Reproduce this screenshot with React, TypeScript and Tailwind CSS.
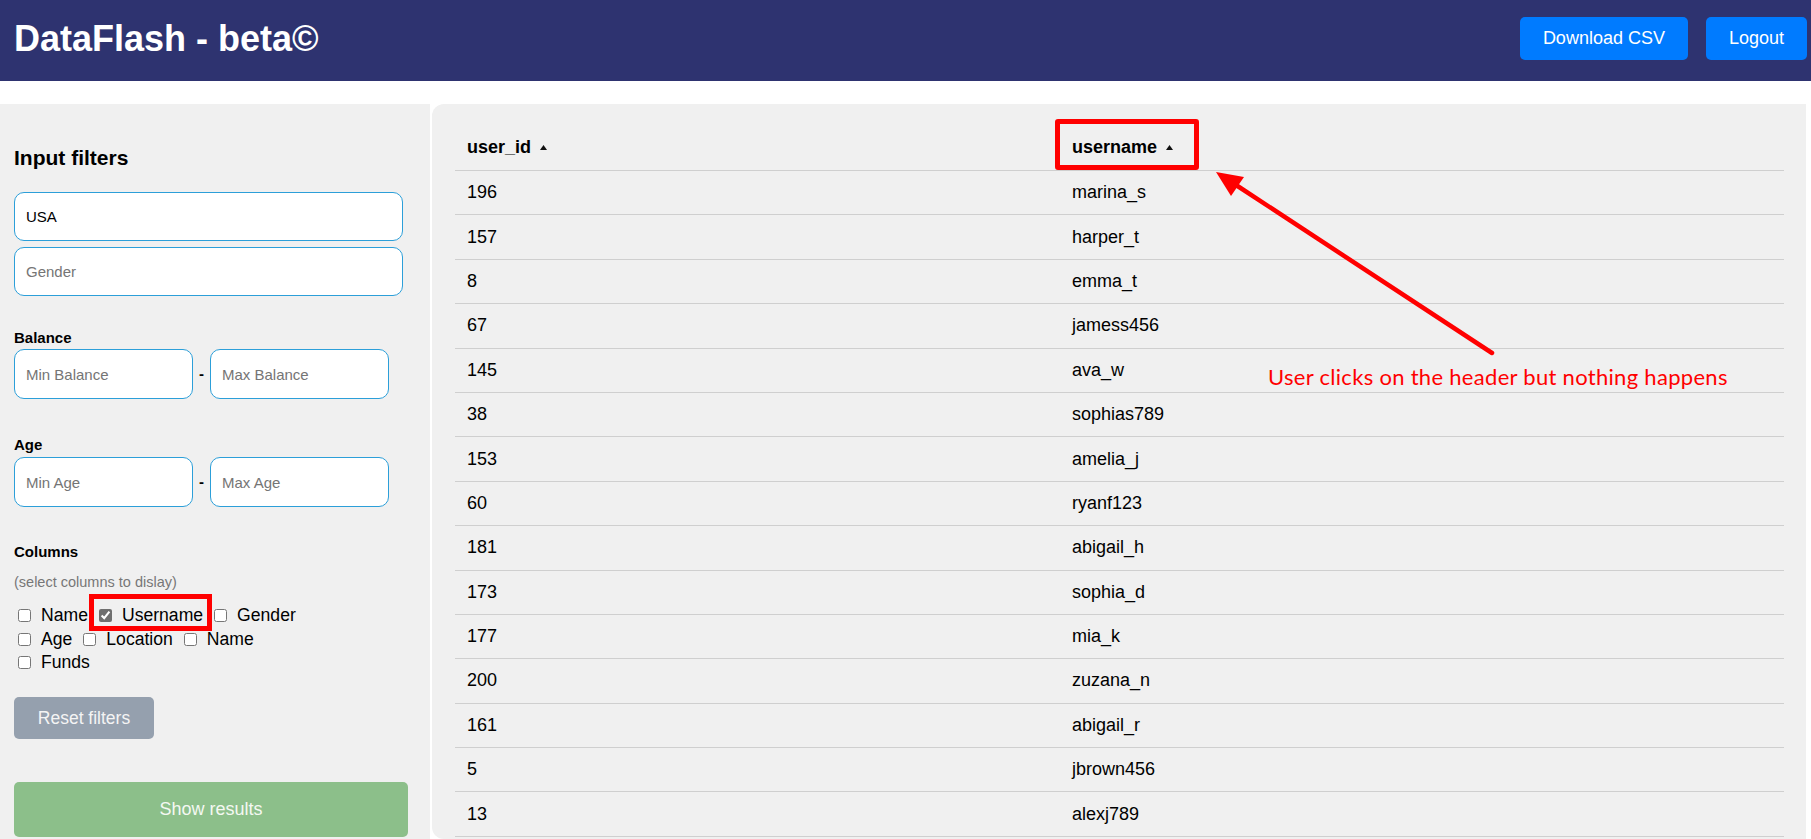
import React from "react";

// DataFlash - tabla de usuarios con filtros laterales y una anotación de bug.

const ROWS: [string, string][] = [
  ["196", "marina_s"],
  ["157", "harper_t"],
  ["8", "emma_t"],
  ["67", "jamess456"],
  ["145", "ava_w"],
  ["38", "sophias789"],
  ["153", "amelia_j"],
  ["60", "ryanf123"],
  ["181", "abigail_h"],
  ["173", "sophia_d"],
  ["177", "mia_k"],
  ["200", "zuzana_n"],
  ["161", "abigail_r"],
  ["5", "jbrown456"],
  ["13", "alexj789"],
];

const COLUMNS = [
  { label: "Name", checked: false },
  { label: "Username", checked: true, marked: true },
  { label: "Gender", checked: false },
  { label: "Age", checked: false },
  { label: "Location", checked: false },
  { label: "Name", checked: false },
  { label: "Funds", checked: false },
];

const FONT = { fontFamily: '"Liberation Sans", Arial, sans-serif' };

function SortArrow() {
  return (
    <svg viewBox="0 0 7 5" className="ml-[9px] h-[5px] w-[7px]" aria-hidden>
      <path d="M3.5 0L7 5H0z" fill="#111" />
    </svg>
  );
}

function TextInput({ placeholder, value, className = "" }: { placeholder: string; value?: string; className?: string }) {
  return (
    <input
      type="text"
      placeholder={placeholder}
      defaultValue={value}
      className={`h-[49px] rounded-[10px] border border-[#2c9fd9] bg-white px-[11px] text-[15px] text-black outline-none placeholder:text-[#757575] ${className}`}
    />
  );
}

function Sidebar() {
  return (
    <aside className="flex w-[430px] shrink-0 flex-col bg-[#f0f0f0] px-[14px] pt-[42px]">
      <h2 className="text-[21px] font-bold leading-[24px] text-black">Input filters</h2>

      <div className="mt-[22px] flex w-[389px] flex-col gap-[6px]">
        <TextInput placeholder="Country" value="USA" />
        <TextInput placeholder="Gender" />
      </div>

      <p className="mt-[33px] text-[15px] font-bold leading-[17px] text-black">Balance</p>
      <div className="mt-[3px] flex items-center">
        <TextInput placeholder="Min Balance" className="h-[50px] w-[179px]" />
        <span className="w-[17px] text-center text-[15px] font-bold">-</span>
        <TextInput placeholder="Max Balance" className="h-[50px] w-[179px]" />
      </div>

      <p className="mt-[37px] text-[15px] font-bold leading-[17px] text-black">Age</p>
      <div className="mt-[4px] flex items-center">
        <TextInput placeholder="Min Age" className="h-[50px] w-[179px]" />
        <span className="w-[17px] text-center text-[15px] font-bold">-</span>
        <TextInput placeholder="Max Age" className="h-[50px] w-[179px]" />
      </div>

      <p className="mt-[36px] text-[15px] font-bold leading-[17px] text-black">Columns</p>
      <p className="mt-[14px] text-[14.5px] leading-[17px] text-[#777]">(select columns to dislay)</p>

      <div className="mt-[13px] flex w-[320px] flex-wrap">
        {COLUMNS.map((c, i) => (
          <label key={i} className="relative mr-[7px] flex items-center text-[17.6px] leading-[23.5px] text-black">
            <input
              type="checkbox"
              defaultChecked={c.checked}
              className="my-0 ml-[4px] mr-[10px] h-[13px] w-[13px] accent-[#6f6f6f]"
            />
            {c.label}
            {c.marked && (
              <span className="pointer-events-none absolute -top-[10px] -right-[9px] -bottom-[3px] -left-[6px] border-[5px] border-[#ff0000]" />
            )}
          </label>
        ))}
      </div>

      <button className="mt-[22.5px] h-[42px] w-[140px] rounded-[5px] bg-[#95a0ae] text-[17.5px] text-[#f4f4f4]">
        Reset filters
      </button>

      <button className="mt-[43px] h-[55px] w-[394px] rounded-[5px] bg-[#8cbf8a] text-[18px] text-[#f4f8f2]">
        Show results
      </button>
    </aside>
  );
}

function ResultsTable() {
  return (
    <section className="relative ml-[2px] w-[1374px] overflow-hidden rounded-l-[12px] bg-[#f0f0f0] pl-[23px] pr-[22px] pt-[21px]">
      <div className="flex h-[46px] items-center border-b border-[#cfcfcf] text-[18px] font-bold text-black">
        <div className="flex w-[605px] items-center pl-[12px]">
          user_id
          <SortArrow />
        </div>
        <div className="relative flex items-center pl-[12px]">
          username
          <SortArrow />
          <span className="pointer-events-none absolute -left-[5px] -top-[15px] h-[51px] w-[144px] rounded-[3px] border-[5px] border-[#ff0000]" />
        </div>
      </div>

      {ROWS.map(([id, name]) => (
        <div key={id} className="flex h-[44.4px] items-center border-b border-[#cfcfcf] text-[18px] text-black">
          <div className="w-[605px] pl-[12px]">{id}</div>
          <div className="pl-[12px]">{name}</div>
        </div>
      ))}

      {/* Anotación: flecha hacia la cabecera */}
      <svg className="pointer-events-none absolute left-0 top-0 h-[400px] w-[1374px]" aria-hidden>
        <line x1="1060" y1="249" x2="804" y2="81" stroke="#ff0000" strokeWidth="4.5" strokeLinecap="round" />
        <polygon points="784,68 812,73 799,92" fill="#ff0000" />
      </svg>
      <p
        className="pointer-events-none absolute left-[836px] top-[260px] whitespace-nowrap text-[22px] leading-[26px] tracking-[0.3px] text-[#ff0000]"
        style={{ fontFamily: "Lato, 'Open Sans', sans-serif" }}
      >
        User clicks on the header but nothing happens
      </p>
    </section>
  );
}

export default function App() {
  return (
    <div className="h-[839px] w-[1811px] overflow-hidden bg-white" style={FONT}>
      <header className="flex h-[81px] items-center justify-between bg-[#2e3370] pb-[4px] pl-[14px] pr-[4px]">
        <h1 className="text-[36px] font-bold text-white">DataFlash - beta©</h1>
        <div className="flex gap-[18px]">
          <button className="h-[43px] rounded-[5px] bg-[#007bff] px-[23px] text-[18px] text-white">Download CSV</button>
          <button className="h-[43px] rounded-[5px] bg-[#007bff] px-[23px] text-[18px] text-white">Logout</button>
        </div>
      </header>

      <main className="mt-[23px] flex h-[735px]">
        <Sidebar />
        <ResultsTable />
      </main>
    </div>
  );
}
